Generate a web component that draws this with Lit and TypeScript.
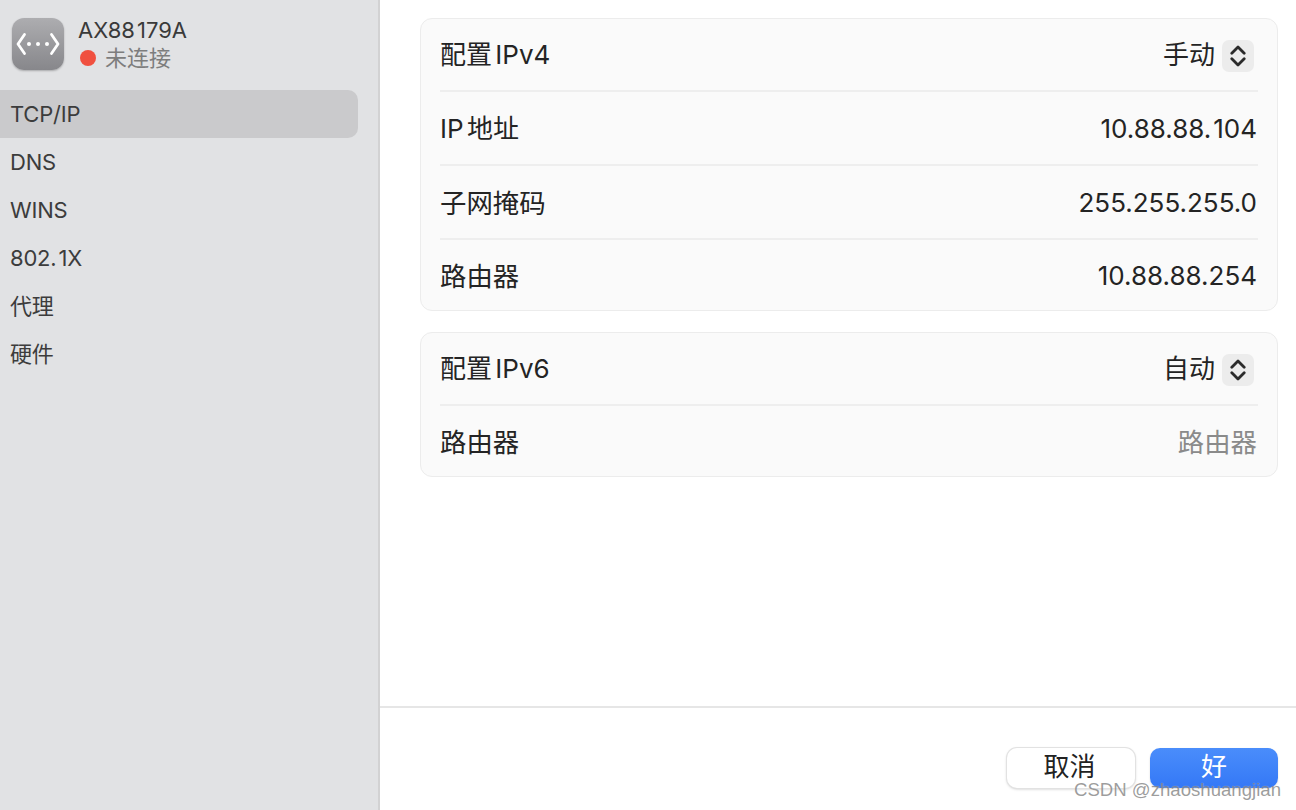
import { css, html, LitElement } from 'lit'
import { customElement } from 'lit/decorators.js'

const chevrons = html`<svg width="16" height="24" viewBox="0 0 16 24" fill="none" stroke="#2b2b2b" stroke-width="2.800" stroke-linecap="round" stroke-linejoin="round"><path d="M1.800 9.200 8 3l6.200 6.200"/><path d="M1.800 14.800 8 21l6.200-6.200"/></svg>`

// Inter's "1" is narrower than the one in the reference, so give it some room
const digits = (text: string) =>
  text.split(/(1)/).map((part) => (part === '1' ? html`<span class="one">1</span>` : part))

@customElement('app-root')
export class AppRoot extends LitElement {
  private tabs = ['TCP/IP', 'DNS', 'WINS', '802.1X', '代理', '硬件']

  private renderLabel(label: string) {
    return html`<span class="label ${/[A-Z]/.test(label) ? '' : 'cjk'}">${label}</span>`
  }

  private renderSelect(label: string, value: string) {
    return html`
      <div class="row">
        ${this.renderLabel(label)}
        <span class="select">${value}<span class="stepper">${chevrons}</span></span>
      </div>
    `
  }

  private renderRow(label: string, value: string, placeholder = false) {
    return html`
      <div class="row">
        ${this.renderLabel(label)}
        <span class="${placeholder ? 'placeholder' : 'value'}">${digits(value)}</span>
      </div>
    `
  }

  render() {
    return html`
      <div class="window">
        <aside class="sidebar">
          <div class="device">
            <div class="device-icon">
              <svg width="52" height="52" viewBox="0 0 52 52" fill="none" stroke="#fff" stroke-width="2.800" stroke-linecap="round" stroke-linejoin="round">
                <path d="M12.500 16.500 6 26l6.500 9.500"/>
                <path d="M39.500 16.500 46 26l-6.500 9.500"/>
                <circle cx="17" cy="26" r="2" fill="#fff" stroke="none"/>
                <circle cx="26" cy="26" r="2" fill="#fff" stroke="none"/>
                <circle cx="35" cy="26" r="2" fill="#fff" stroke="none"/>
              </svg>
            </div>
            <div class="device-text">
              <div class="device-name">${digits('AX88179A')}</div>
              <div class="device-status"><span class="dot"></span>未连接</div>
            </div>
          </div>
          <nav class="tabs">
            ${this.tabs.map((t, i) => html`<div class="tab ${i === 0 ? 'active' : ''}">${digits(t)}</div>`)}
          </nav>
        </aside>
        <main class="main">
          <div class="content">
            <section class="card">
              ${this.renderSelect('配置 IPv4', '手动')}
              ${this.renderRow('IP 地址', '10.88.88.104')}
              ${this.renderRow('子网掩码', '255.255.255.0')}
              ${this.renderRow('路由器', '10.88.88.254')}
            </section>
            <section class="card">
              ${this.renderSelect('配置 IPv6', '自动')}
              ${this.renderRow('路由器', '路由器', true)}
            </section>
          </div>
          <footer class="footer">
            <button class="btn">取消</button>
            <button class="btn primary">好</button>
          </footer>
        </main>
        <div class="watermark">CSDN @zhaoshuangjian</div>
      </div>
    `
  }

  static styles = css`
    :host {
      display: block;
      font-family: Inter, 'Noto Sans CJK SC', sans-serif;
      color: #242424;
    }

    .window {
      position: relative;
      display: flex;
      width: 1296px;
      height: 810px;
      overflow: hidden;
      background: #fff;
    }

    .sidebar {
      width: 378px;
      flex-shrink: 0;
      background: #e1e2e4;
      border-right: 2px solid #d2d2d3;
    }

    .one {
      padding-left: 2px;
    }

    .device {
      display: flex;
      gap: 14px;
      height: 90px;
      padding: 16px 0 0 12px;
      box-sizing: border-box;
    }

    .device-icon {
      width: 52px;
      height: 52px;
      margin-top: 2px;
      border-radius: 12px;
      background: linear-gradient(#adadb0, #87878b);
      box-shadow: 0 1px 2px rgba(0, 0, 0, 0.25);
    }

    .device-name {
      font-size: 22px;
      line-height: 28px;
      color: #3a3a3a;
    }

    .device-status {
      display: flex;
      align-items: center;
      font-size: 22px;
      line-height: 28px;
      color: #7d7d7d;
      margin-left: 2px;
    }

    .dot {
      width: 16px;
      height: 16px;
      margin-right: 9px;
      border-radius: 50%;
      background: #f0503f;
    }

    .tab {
      height: 48px;
      width: 358px;
      padding-left: 10px;
      box-sizing: border-box;
      border-radius: 0 10px 10px 0;
      font-size: 22px;
      line-height: 48px;
      letter-spacing: -0.2px;
      color: #3c3c3c;
    }

    .tab.active {
      background: #cacacc;
    }

    .main {
      flex: 1;
      display: flex;
      flex-direction: column;
    }

    .content {
      flex: 1;
      display: flex;
      flex-direction: column;
      gap: 21px;
      padding: 18px 18px 0 40px;
    }

    .card {
      border: 1px solid #ececec;
      border-radius: 12px;
      background: #fafafa;
      padding: 0 19px;
    }

    .row {
      display: flex;
      align-items: center;
      justify-content: space-between;
      box-sizing: border-box;
      height: 74px;
      padding-top: 1px;
      border-bottom: 2px solid #eeeeee;
      font-size: 26px;
      line-height: 30px;
      white-space: pre;
    }

    .row:first-child {
      height: 73px;
      padding-top: 0;
    }

    .row:last-child {
      border-bottom: none;
      height: 70px;
      padding-top: 2px;
    }

    .label {
      word-spacing: -4px;
    }

    .label.cjk,
    .placeholder {
      font-size: 26.4px;
    }

    .value,
    .placeholder {
      padding-right: 1px;
    }

    .select {
      display: flex;
      align-items: center;
      gap: 7px;
      padding-right: 4px;
    }

    .stepper {
      display: flex;
      align-items: center;
      justify-content: center;
      width: 32px;
      height: 32px;
      margin-top: 2px;
      border-radius: 7px;
      background: #ececec;
    }

    .placeholder {
      color: #8a8a8a;
    }

    .footer {
      display: flex;
      justify-content: flex-end;
      gap: 15px;
      height: 104px;
      padding: 40px 18px 0 0;
      box-sizing: border-box;
      border-top: 2px solid #e6e6e6;
    }

    .btn {
      width: 128px;
      height: 40px;
      padding: 0 3px 2px 0;
      border: none;
      border-radius: 10px;
      background: #fff;
      box-shadow: 0 0 0 1px #e2e2e2, 0 1px 3px rgba(0, 0, 0, 0.25);
      font: inherit;
      font-size: 26px;
      line-height: 30px;
      color: #222;
    }

    .btn.primary {
      padding-right: 0;
      background: linear-gradient(#4a8dfb, #3478f6);
      box-shadow: 0 1px 2px rgba(0, 0, 0, 0.15);
      color: #fff;
    }

    .watermark {
      position: absolute;
      right: 15px;
      bottom: 8px;
      font-family: 'Liberation Sans', sans-serif;
      font-size: 18.6px;
      line-height: 24px;
      color: rgba(90, 90, 90, 0.6);
      text-shadow: 0 0 1px rgba(255, 255, 255, 0.6);
    }
  `
}
